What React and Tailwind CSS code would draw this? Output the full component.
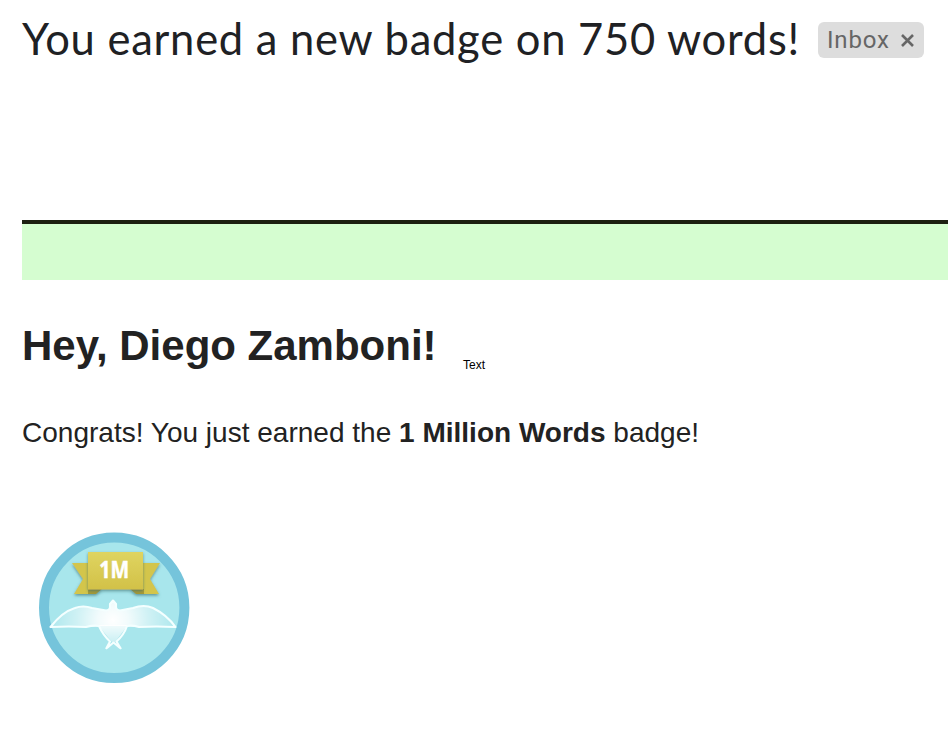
function Badge() {
  return (
    <svg className="block" width="170" height="165" viewBox="0 0 170 165" role="img" aria-label="1 Million Words">
      <defs>
        <linearGradient id="gold" x1="0" y1="0" x2="0" y2="1">
          <stop offset="0" stopColor="#dfd460" />
          <stop offset="1" stopColor="#d2c148" />
        </linearGradient>
        <radialGradient id="wing" gradientUnits="userSpaceOnUse" cx="83" cy="95" r="60">
          <stop offset="0" stopColor="#fff" />
          <stop offset=".25" stopColor="#fff" stopOpacity=".85" />
          <stop offset=".6" stopColor="#fff" stopOpacity=".45" />
          <stop offset="1" stopColor="#fff" stopOpacity=".1" />
        </radialGradient>
        <linearGradient id="tail" gradientUnits="userSpaceOnUse" x1="0" y1="98" x2="0" y2="119">
          <stop offset="0" stopColor="#fff" stopOpacity=".9" />
          <stop offset="1" stopColor="#fff" stopOpacity=".35" />
        </linearGradient>
        <filter id="shadow" x="-20%" y="-20%" width="140%" height="150%">
          <feDropShadow dx="0" dy="1.5" stdDeviation="1.6" floodColor="#3c7070" floodOpacity=".7" />
        </filter>
        <filter id="soft" x="-10%" y="-10%" width="120%" height="120%">
          <feGaussianBlur stdDeviation=".75" />
        </filter>
      </defs>
      <g filter="url(#soft)">
        <circle cx="84.2" cy="82.8" r="70.2" fill="#a8e6ec" stroke="#75c4db" strokeWidth="10" />
        <g filter="url(#shadow)">
          <path d="M42 38H66V65L62 69H44L53 54Z" fill="#d3c54c" />
          <path d="M130 38H106V65L110 69H129L120 54Z" fill="#d3c54c" />
          <path d="M58 64H72L66 69H58Z" fill="#a89a35" />
          <path d="M114 64H100L106 69H114Z" fill="#a89a35" />
        </g>
        <g filter="url(#shadow)">
          <rect x="58" y="27" width="55" height="37.5" fill="url(#gold)" />
        </g>
        <path
          d="M20.5 102Q32 87 45 83Q53 80 62 83L76 85.500Q80 85 80 82V79L83 75.500L86 79V82Q86 85 90 85.500L103 83Q114 79 123 83Q137 90 145.500 102Q126 100 109 102L96 101H70L56 102Q39 100 20.500 102Z"
          fill="url(#wing)"
        />
        <path d="M68 100H98L83.500 119Z" fill="url(#tail)" />
        <path
          d="M69 101Q73 110 80 116.500L76 124M97 101Q94 110 86.500 116.500L91 124M77 123L83.500 117.500L90 123M69 101Q64 100 56 102Q39 101 20.500 102Q32 87 45 83Q53 80 62 83L76 85.500Q80 85 80 82V79L83 75.500L86 79V82Q86 85 90 85.500L103 83Q114 79 123 83Q137 90 145.500 102Q126 101 109 102Q102 100 97 101"
          fill="none"
          stroke="#f4ffff"
          strokeWidth="2.1"
          strokeLinejoin="round"
        />
      </g>
      <text x="84.300" y="53" textAnchor="middle" textLength="30" lengthAdjust="spacingAndGlyphs" strokeWidth=".5" className="fill-white stroke-white font-['Open_Sans',sans-serif] text-[24px] font-bold">1M</text>
    </svg>
  );
}

export default function App() {
  return (
    <main className="h-[730px] w-full overflow-hidden bg-white pl-[22px] font-['Liberation_Sans',Arial,sans-serif] text-[#222]">
      <header className="flex h-[220px] items-start pt-[22px]">
        <h1 className="-mt-[10px] w-[796px] shrink-0 whitespace-nowrap font-['Lato',sans-serif] text-[43.5px] leading-[52px] tracking-[0.75px] text-[#202124]">
          You earned a new badge on 750 words!
        </h1>
        <div className="flex h-9 w-[106px] shrink-0 items-center rounded-[6px] bg-[#ddd] pl-[9px] font-['Roboto',sans-serif] text-[24px] text-[#666]">
          <span className="w-[74px] tracking-[0.8px]">Inbox</span>
          <svg width="13" height="13" viewBox="0 0 13 13" fill="none" stroke="#666" strokeWidth="2.6" aria-hidden="true">
            <path d="M1 1L12 12M12 1L1 12" />
          </svg>
        </div>
      </header>
      <div className="h-[60px] border-t-4 border-[#1c1f10] bg-[#d5fdd0]" />
      <div className="flex pt-[42px]">
        <h2 className="w-[441px] whitespace-nowrap text-[42px] font-bold leading-[48px]">Hey, Diego Zamboni!</h2>
        <span className="pt-[35px] text-[12px] leading-[16px] text-black">Text</span>
      </div>
      <p className="mt-[44px] whitespace-nowrap text-[28px] leading-[32px] tracking-[0.01px]">
        Congrats! You just earned the <strong>1 Million Words</strong> badge!
      </p>
      <div className="ml-2 mt-[76px]">
        <Badge />
      </div>
    </main>
  );
}
